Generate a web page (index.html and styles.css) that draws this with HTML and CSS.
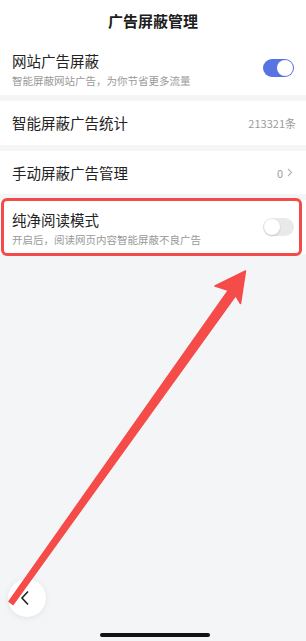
FILE: index.html
```html
<!DOCTYPE html>
<html lang="zh">
<head>
<meta charset="utf-8">
<link rel="stylesheet" href="styles.css">
</head>
<body>
<div class="screen">
  <header class="header">广告屏蔽管理</header>
  <section class="card card-tall">
    <div class="texts">
      <div class="title">网站广告屏蔽</div>
      <div class="sub">智能屏蔽网站广告，为你节省更多流量</div>
    </div>
    <div class="toggle on"><span class="knob"></span></div>
  </section>
  <section class="card card-row">
    <div class="title">智能屏蔽广告统计</div>
    <div class="value">213321条</div>
  </section>
  <section class="card card-row card-row3">
    <div class="title">手动屏蔽广告管理</div>
    <div class="value">0<svg class="chev" width="6" height="9" viewBox="0 0 6 9"><path d="M1 1 L4.5 4.5 L1 8" fill="none" stroke="#b5b5b5" stroke-width="1.1"/></svg></div>
  </section>
  <section class="card card-tall card-marked">
    <div class="texts">
      <div class="title">纯净阅读模式</div>
      <div class="sub">开启后，阅读网页内容智能屏蔽不良广告</div>
    </div>
    <div class="toggle"><span class="knob"></span></div>
    <span class="mark"></span>
  </section>

  <button class="back"><svg width="10" height="16" viewBox="0 0 10 16"><path d="M8 1.5 L2 8 L8 14.5" fill="none" stroke="#222" stroke-width="1.6"/></svg></button>

  <svg class="arrow" width="306" height="641" viewBox="0 0 306 641">
    <polygon points="9,601.5 228.3,290.4 215,286 245.5,271 240.5,303.5 235.7,295.6 13,604.5" fill="#f54b49" stroke="#f54b49" stroke-width="1.5" stroke-linejoin="round"/>
  </svg>

  <div class="home"></div>
</div>
</body>
</html>
```

FILE: styles.css
```css
* { box-sizing: border-box; margin: 0; padding: 0; }
html, body { width: 306px; height: 641px; overflow: hidden; }
body {
  background: #f4f5f7;
  font-family: "Noto Sans CJK SC", "Noto Sans", sans-serif;
  color: #222;
}
.screen { position: relative; width: 306px; height: 641px; }
.header {
  height: 41px;
  background: #fff;
  text-align: center;
  font-size: 15px;
  font-weight: 700;
  line-height: 20px;
  padding-top: 11px;
  color: #1d1d1d;
}
.card {
  position: relative;
  background: #fff;
  display: flex;
  align-items: center;
  justify-content: space-between;
  margin-bottom: 6px;
}
.card-tall { height: 54px; padding: 0 12px; }
.card-row { height: 44px; padding: 0 10px 0 12px; }
.card-row3 { height: 43px; padding-right: 13px; }
.texts { display: flex; flex-direction: column; padding-top: 2px; }
.title { font-size: 14.5px; line-height: 20px; color: #222; }
.sub { font-size: 10.5px; line-height: 14px; color: #9a9a9a; margin-top: 3px; }
.value { font-size: 11px; color: #9c9c9c; display: flex; align-items: center; gap: 4px; }
.chev { display: block; }
.toggle {
  width: 31px;
  height: 18px;
  border-radius: 9px;
  background: #e9e9ea;
  position: relative;
  flex: none;
}
.toggle .knob {
  position: absolute;
  top: 1px;
  left: 1px;
  width: 16px;
  height: 16px;
  border-radius: 50%;
  background: #fff;
  box-shadow: 0 1px 2px rgba(0,0,0,0.18);
}
.toggle.on { background: #5873e3; }
.toggle.on .knob { left: 14px; box-shadow: none; }
.mark {
  position: absolute;
  left: 1px;
  right: 4px;
  top: -2px;
  bottom: -2px;
  border: 3px solid #f44a48;
  border-radius: 6px;
}
.back {
  position: absolute;
  left: 8px;
  top: 579px;
  width: 38px;
  height: 38px;
  border-radius: 50%;
  border: none;
  background: #fff;
  box-shadow: 0 1px 6px rgba(0,0,0,0.08);
  display: flex;
  align-items: center;
  justify-content: center;
  padding-right: 4px;
}
.back svg { display: block; }
.arrow { position: absolute; left: 0; top: 0; pointer-events: none; }
.home {
  position: absolute;
  left: 100px;
  top: 633px;
  width: 110px;
  height: 4px;
  border-radius: 2px;
  background: #111;
}
```
